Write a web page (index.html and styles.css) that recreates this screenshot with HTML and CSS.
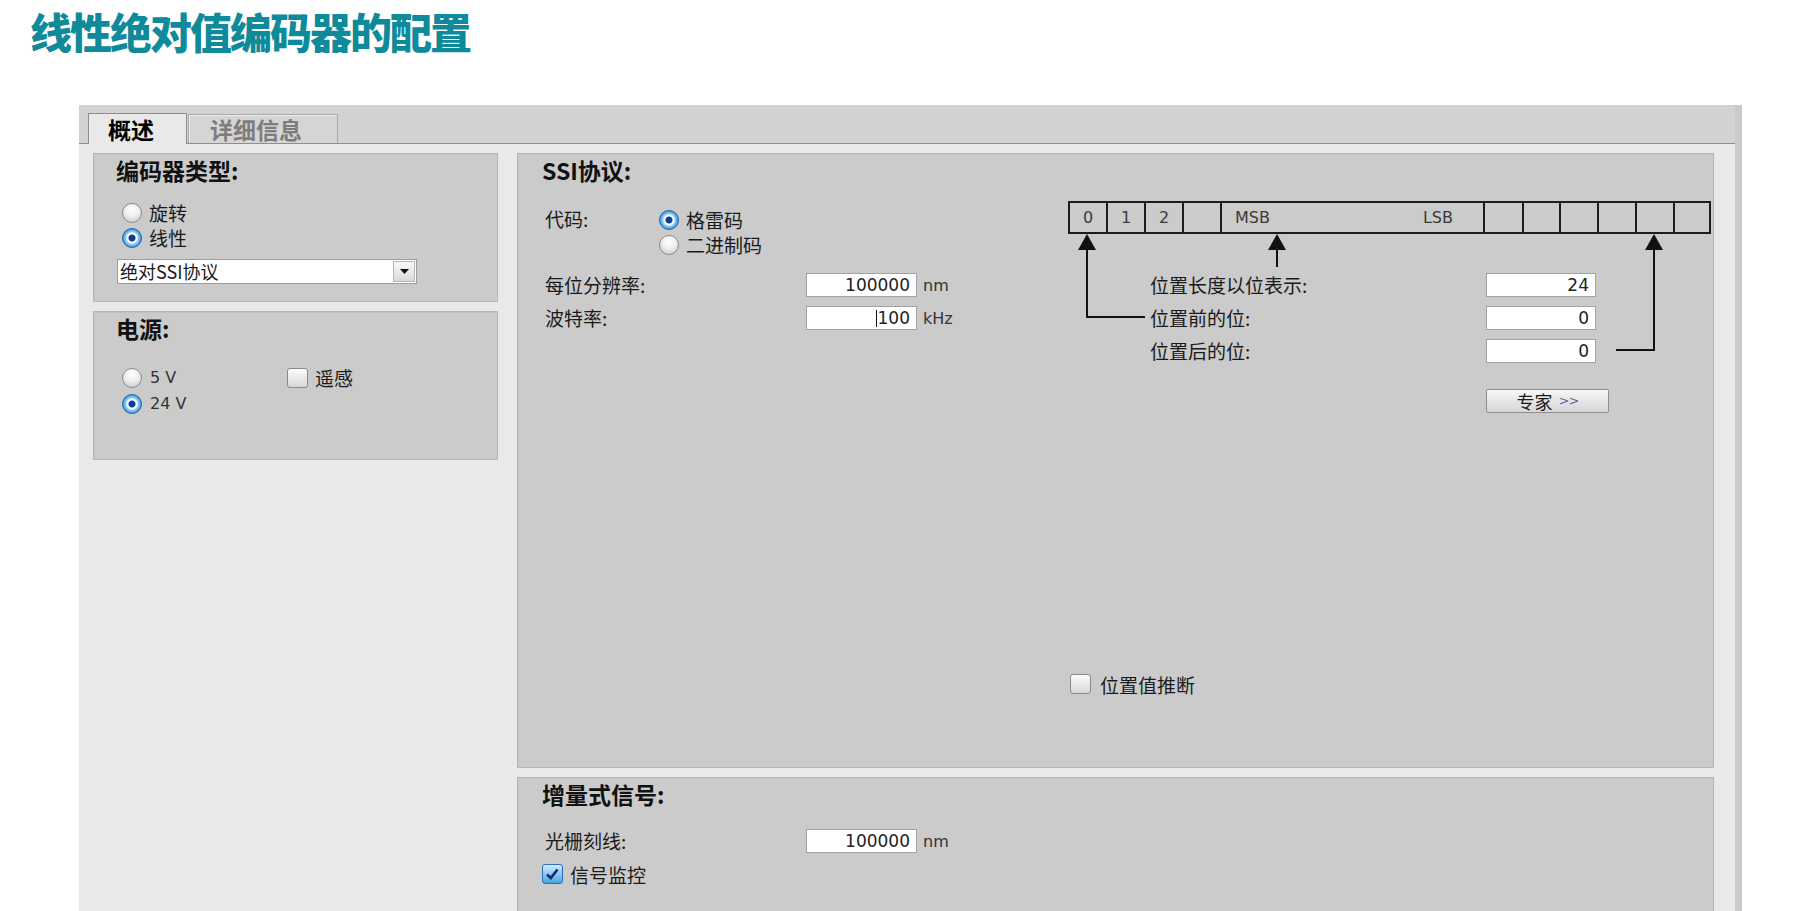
FILE: index.html
```html
<!DOCTYPE html>
<html lang="zh">
<head>
<meta charset="utf-8">
<title>线性绝对值编码器的配置</title>
<link rel="stylesheet" href="styles.css">
</head>
<body>
<h1 class="page-title">线性绝对值编码器的配置</h1>
<div class="panel">
  <div class="tabbar">
    <div class="tab tab-active">概述</div>
    <div class="tab tab-inactive">详细信息</div>
  </div>
  <div class="panel-body">
    <div class="left-col">
      <section class="box box-encoder">
        <h2 class="box-title">编码器类型:</h2>
        <div class="radio-list enc-list">
          <div class="opt opt-mid"><span class="radio"></span><span>旋转</span></div>
          <div class="opt opt-mid"><span class="radio on"></span><span>线性</span></div>
        </div>
        <div class="select">
          <span class="select-text">绝对SSI协议</span>
          <span class="select-btn"><svg width="9" height="5" viewBox="0 0 9 5"><polygon points="0,0 9,0 4.5,5" fill="#111"/></svg></span>
        </div>
      </section>
      <section class="box box-power">
        <h2 class="box-title">电源:</h2>
        <div class="power-row">
          <div class="radio-list power-list">
            <div class="opt opt-tall"><span class="radio"></span><span class="lat">5 V</span></div>
            <div class="opt opt-tall"><span class="radio on"></span><span class="lat">24 V</span></div>
          </div>
          <div class="opt opt-tall check-opt"><span class="check"></span><span>遥感</span></div>
        </div>
      </section>
    </div>
    <div class="right-col">
      <section class="box box-ssi">
        <h2 class="box-title">SSI协议:</h2>
        <div class="ssi-main">
          <div class="ssi-form">
            <div class="code-row">
              <span class="lbl code-lbl">代码:</span>
              <div class="radio-list">
                <div class="opt opt-mid"><span class="radio on"></span><span>格雷码</span></div>
                <div class="opt opt-mid"><span class="radio"></span><span>二进制码</span></div>
              </div>
            </div>
            <div class="field-grid">
              <span class="lbl">每位分辨率:</span><span class="input">100000</span><span class="unit">nm</span>
              <span class="lbl">波特率:</span><span class="input"><span class="caret"></span>100</span><span class="unit">kHz</span>
            </div>
          </div>
          <div class="diagram">
            <div class="bits">
              <span class="bit w36 first">0</span>
              <span class="bit w38">1</span>
              <span class="bit w38">2</span>
              <span class="bit w38"></span>
              <span class="bit wide"><span>MSB</span><span>LSB</span></span>
              <span class="bit w39"></span>
              <span class="bit w37"></span>
              <span class="bit w38"></span>
              <span class="bit w38"></span>
              <span class="bit w38"></span>
              <span class="bit w36"></span>
            </div>
            <div class="pos-grid">
              <span class="lbl">位置长度以位表示:</span><span class="input small">24</span>
              <span class="lbl">位置前的位:</span><span class="input small">0</span>
              <span class="lbl">位置后的位:</span><span class="input small">0</span>
            </div>
            <div class="btn-row"><span class="btn">专家 <span class="btn-arrows">&gt;&gt;</span></span></div>
            <div class="opt opt-check infer"><span class="check"></span><span>位置值推断</span></div>
            <svg class="arrows" width="643" height="160" viewBox="0 0 643 160">
              <g fill="#111">
                <polygon points="19,33 10,49 28,49"/>
                <polygon points="209,33 200,49 218,49"/>
                <polygon points="586,33 577,49 595,49"/>
              </g>
              <g stroke="#111" stroke-width="2" fill="none">
                <polyline points="19,48 19,116 77,116"/>
                <line x1="209" y1="48" x2="209" y2="66"/>
                <polyline points="586,48 586,149 548,149"/>
              </g>
            </svg>
          </div>
        </div>
      </section>
      <section class="box box-inc">
        <h2 class="box-title">增量式信号:</h2>
        <div class="field-grid inc-grid">
          <span class="lbl">光栅刻线:</span><span class="input">100000</span><span class="unit">nm</span>
        </div>
        <div class="opt opt-check monitor">
          <span class="check on"><svg width="19" height="18" viewBox="0 0 19 18"><path d="M4 9.5 L7.8 13 L14.5 4.5" stroke="#0b2f6e" stroke-width="2.6" fill="none"/></svg></span>
          <span>信号监控</span>
        </div>
      </section>
    </div>
  </div>
</div>
</body>
</html>
```

FILE: styles.css
```css
html, body {
  margin: 0;
  padding: 0;
}

body {
  height: 911px;
  overflow: hidden;
  background: #ffffff;
  font-family: "Noto Sans CJK SC", "DejaVu Sans", sans-serif;
  font-size: 19px;
  color: #1a1a1a;
}

.page-title {
  margin: 10px 0 0 30px;
  font-size: 42px;
  line-height: 42px;
  letter-spacing: -2px;
  font-weight: 900;
  color: #0f8a9a;
}

.panel {
  margin: 53px 0 0 79px;
  width: 1656px;
  height: 806px;
  border-right: 7px solid #cbcbcb;
  background: #e9e9e9;
}

.tabbar {
  box-sizing: border-box;
  height: 39px;
  background: #d2d2d2;
  border-bottom: 1px solid #8e8e8e;
  display: flex;
  align-items: flex-end;
  padding-left: 9px;
}

.tab {
  box-sizing: border-box;
  font-weight: 700;
  font-size: 23px;
}

.tab-active {
  width: 99px;
  height: 31px;
  margin-bottom: -1px;
  background: #e9e9e9;
  border: 1px solid #8e8e8e;
  border-bottom: none;
  padding-left: 19px;
  line-height: 30px;
  color: #000;
}

.tab-inactive {
  width: 150px;
  height: 29px;
  margin-left: 1px;
  background: #d5d5d5;
  border: 1px solid #a9a9a9;
  border-bottom: none;
  box-shadow: inset 1px 1px 0 #ececec;
  padding-left: 21px;
  line-height: 28px;
  color: #7d7d7d;
}

.panel-body {
  display: flex;
  gap: 19px;
  padding: 9px 0 0 14px;
}

.left-col {
  width: 405px;
  display: flex;
  flex-direction: column;
  gap: 9px;
}

.right-col {
  width: 1197px;
  display: flex;
  flex-direction: column;
  gap: 9px;
}

.box {
  box-sizing: border-box;
  background: #cbcbcb;
  border: 1px solid #b6b6b6;
  box-shadow: inset 1px 1px 0 #c2c2c2;
  padding: 3px 0 0 22px;
}

.box-title {
  margin: 0;
  font-size: 23px;
  line-height: 26px;
  font-weight: 700;
  color: #111;
}

.box-encoder { height: 149px; }
.box-power { height: 149px; }
.box-ssi { height: 615px; padding-left: 24px; }
.box-inc { height: 200px; padding-left: 24px; }

.lat {
  font-family: "DejaVu Sans", sans-serif;
  font-size: 16px;
  color: #333;
}

.opt {
  display: flex;
  align-items: center;
  gap: 8px;
  height: 23px;
  line-height: 23px;
}

.opt-tall { height: 26px; line-height: 26px; }
.opt-mid { height: 25px; line-height: 25px; gap: 7px; }

.radio {
  flex: none;
  box-sizing: border-box;
  width: 20px;
  height: 20px;
  border-radius: 50%;
  border: 1px solid #8a8a8a;
  background: radial-gradient(circle at 50% 30%, #ffffff 0%, #eeeeee 45%, #c2c2c2 100%);
}

.radio.on {
  border-color: #2266a6;
  background: radial-gradient(circle at 50% 50%, #0d3f8c 0 3px, #ffffff 4px 5px, #9fd6fb 6px, #2f8ad6 9.5px);
}

.check {
  flex: none;
  box-sizing: border-box;
  width: 21px;
  height: 20px;
  border-radius: 3px;
  border: 1px solid #8a8a8a;
  background: linear-gradient(#fdfdfd, #d6d6d6);
  display: flex;
  align-items: center;
  justify-content: center;
}

.check.on {
  border-color: #2c6fb4;
  background: linear-gradient(#d2ecff, #4aa3e6);
}

.enc-list {
  margin-top: 17px;
  padding-left: 6px;
}

.select {
  box-sizing: border-box;
  margin: 9px 0 0 1px;
  width: 300px;
  height: 25px;
  background: #ffffff;
  border: 1px solid #9c9c9c;
  display: flex;
}

.select-text {
  flex: 1;
  padding-left: 2px;
  line-height: 23px;
  font-size: 18px;
}

.select-btn {
  box-sizing: border-box;
  width: 22px;
  margin: 1px;
  border: 1px solid #b4b4b4;
  background: linear-gradient(#fafafa, #dadada);
  display: flex;
  align-items: center;
  justify-content: center;
}

.power-row {
  margin-top: 24px;
  display: flex;
  align-items: flex-start;
}

.power-list {
  box-sizing: border-box;
  width: 171px;
  padding-left: 6px;
}

.check-opt { gap: 7px; }

.ssi-main {
  margin-top: 18px;
  display: flex;
}

.ssi-form {
  box-sizing: border-box;
  width: 526px;
  padding: 6px 0 0 3px;
}

.code-row {
  display: flex;
}

.code-lbl {
  width: 114px;
  line-height: 25px;
}

.lbl {
  line-height: 24px;
}

.field-grid {
  margin-top: 16px;
  display: grid;
  grid-template-columns: 261px 111px auto;
  row-gap: 9px;
  align-items: center;
}

.input {
  box-sizing: border-box;
  height: 24px;
  border: 1px solid #a2a2a2;
  background: #ffffff;
  text-align: right;
  padding-right: 6px;
  font-family: "DejaVu Sans", sans-serif;
  font-size: 17px;
  line-height: 22px;
  color: #222;
}

.caret {
  display: inline-block;
  width: 1px;
  height: 17px;
  background: #111;
  vertical-align: -3px;
  margin-right: 1px;
}

.unit {
  margin-left: 6px;
  font-family: "DejaVu Sans", sans-serif;
  font-size: 16px;
  color: #333;
}

.diagram {
  position: relative;
  width: 643px;
}

.bits {
  box-sizing: border-box;
  display: flex;
  height: 33px;
  border: 2px solid #1c1c1c;
}

.bit {
  box-sizing: border-box;
  flex: none;
  border-left: 2px solid #1c1c1c;
  display: flex;
  align-items: center;
  justify-content: center;
  font-family: "DejaVu Sans", sans-serif;
  font-size: 16px;
  color: #3a3a3a;
}

.bit.first { border-left: none; }
.w36 { width: 36px; }
.w37 { width: 37px; }
.w38 { width: 38px; }
.w39 { width: 39px; }

.bit.wide {
  width: 263px;
  justify-content: space-between;
  padding: 0 30px 0 13px;
}

.pos-grid {
  display: grid;
  grid-template-columns: 336px 110px;
  row-gap: 9px;
  padding: 39px 0 0 82px;
  align-items: center;
}

.input.small { width: 110px; }

.btn-row {
  margin-top: 26px;
  padding-left: 418px;
}

.btn {
  box-sizing: border-box;
  width: 123px;
  height: 24px;
  border: 1px solid #8f8f8f;
  border-radius: 2px;
  background: linear-gradient(#f6f6f6, #d6d6d6);
  display: flex;
  align-items: center;
  justify-content: center;
  gap: 6px;
  font-size: 18px;
  line-height: 22px;
}

.btn-arrows {
  font-family: "DejaVu Sans", sans-serif;
  font-size: 13px;
  color: #5a6c9a;
  letter-spacing: -1px;
}

.infer {
  margin-top: 261px;
  padding-left: 2px;
  height: 20px;
  gap: 9px;
}

.arrows {
  position: absolute;
  left: 0;
  top: 0;
  pointer-events: none;
}

.inc-grid {
  margin-top: 22px;
  padding-left: 3px;
}

.monitor {
  margin-top: 11px;
  height: 20px;
  gap: 7px;
}
```
